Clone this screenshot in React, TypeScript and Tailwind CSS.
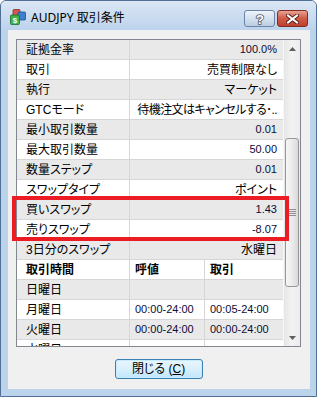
import React from 'react';

const gridFont = "font-['Liberation_Sans','Noto_Sans_CJK_JP',sans-serif] [font-feature-settings:'palt']";

type Row = { label: string; value: string; num?: boolean; tight?: boolean };

const rows: Row[] = [
  { label: '証拠金率', value: '100.0%', num: true },
  { label: '取引', value: '売買制限なし' },
  { label: '執行', value: 'マーケット' },
  { label: 'GTCモード', value: '待機注文はキャンセルする･..', tight: true },
  { label: '最小取引数量', value: '0.01', num: true },
  { label: '最大取引数量', value: '50.00', num: true },
  { label: '数量ステップ', value: '0.01', num: true },
  { label: 'スワップタイプ', value: 'ポイント' },
  { label: '買いスワップ', value: '1.43', num: true },
  { label: '売りスワップ', value: '-8.07', num: true },
  { label: '3日分のスワップ', value: '水曜日' },
];

const sessions = [
  { day: '日曜日', quote: '', trade: '' },
  { day: '月曜日', quote: '00:00-24:00', trade: '00:05-24:00' },
  { day: '火曜日', quote: '00:00-24:00', trade: '00:00-24:00' },
  { day: '水曜日', quote: '', trade: '' },
];

function PropRow({ row, shaded }: { row: Row; shaded: boolean }) {
  return (
    <div className={`flex h-[20px] shrink-0 border-b border-[#d6d6d6] ${shaded ? 'bg-[#e9e9e9]' : 'bg-white'}`}>
      <div className="w-[113px] shrink-0 border-r border-[#d6d6d6] pl-[9px] flex items-center text-[12px] text-black whitespace-nowrap">
        {row.label}
      </div>
      <div
        className={`flex-1 flex items-center justify-end pr-[6px] whitespace-nowrap overflow-hidden ${
          row.num ? 'text-[11px] text-[#0c0c36]' : 'text-[12px] text-black'
        } ${row.tight ? 'tracking-[-0.6px]' : ''}`}
      >
        {row.value}
      </div>
    </div>
  );
}

function TimeRow({ a, b, c, shaded, bold }: { a: string; b: string; c: string; shaded: boolean; bold?: boolean }) {
  const cell = bold ? 'text-[12px] font-bold text-black' : 'text-[11px] text-[#0c0c36]';
  return (
    <div className={`flex h-[20px] shrink-0 border-b border-[#d6d6d6] ${shaded ? 'bg-[#e9e9e9]' : 'bg-white'}`}>
      <div className={`w-[113px] shrink-0 border-r border-[#d6d6d6] pl-[9px] flex items-center text-[12px] text-black ${bold ? 'font-bold' : ''}`}>
        {a}
      </div>
      <div className={`w-[75px] shrink-0 border-r border-[#d6d6d6] pl-[5px] flex items-center whitespace-nowrap ${cell}`}>{b}</div>
      <div className={`flex-1 pl-[5px] flex items-center whitespace-nowrap ${cell}`}>{c}</div>
    </div>
  );
}

function Scrollbar() {
  return (
    <div className="w-[17px] shrink-0 flex flex-col bg-gradient-to-r from-[#e6e6e6] via-[#f3f3f3] to-[#ececec] border-l border-[#f7f7f7]">
      <div className="h-[17px] shrink-0 flex items-center justify-center">
        <svg width="7" height="4" viewBox="0 0 7 4">
          <path d="M3.5 0 L7 4 L0 4 Z" fill="#5f5f5f" />
        </svg>
      </div>
      <div className="flex-1 flex flex-col">
        <div className="mt-[81px] mx-[1px] h-[149px] rounded-[3px] border border-[#979797] bg-gradient-to-r from-[#f6f6f6] via-[#ececec] to-[#d9d9d9] flex flex-col items-center justify-center gap-[1px]">
          <div className="w-[7px] h-[1px] bg-[#8e8e8e]" />
          <div className="w-[7px] h-[1px] bg-[#8e8e8e]" />
          <div className="w-[7px] h-[1px] bg-[#8e8e8e]" />
          <div className="w-[7px] h-[1px] bg-[#8e8e8e]" />
        </div>
      </div>
      <div className="h-[17px] shrink-0 flex items-center justify-center">
        <svg width="7" height="4" viewBox="0 0 7 4">
          <path d="M0 0 L7 0 L3.5 4 Z" fill="#5f5f5f" />
        </svg>
      </div>
    </div>
  );
}

function AppIcon() {
  return (
    <svg width="16" height="16" viewBox="0 0 16 16">
      <rect x="3" y="0.5" width="7" height="6" rx="1" fill="#d9534f" stroke="#8a2a26" strokeWidth="0.8" />
      <rect x="8" y="3" width="7.5" height="8" rx="1" fill="#3d7fd0" stroke="#1f4f8f" strokeWidth="0.8" />
      <rect x="0.5" y="6" width="9" height="9.5" rx="1" fill="#3fb24a" stroke="#1d6e25" strokeWidth="0.8" />
      <text x="5" y="14" textAnchor="middle" fontSize="8" fontWeight="bold" fill="#ffffff" fontFamily="Liberation Sans, sans-serif">$</text>
    </svg>
  );
}

export default function App() {
  return (
    <div className="relative w-[317px] h-[397px] overflow-hidden bg-white">
      <div className="w-[317px] h-[397px] flex flex-col rounded-t-[6px] border border-[#4f6f96] bg-[#bcd3ec]">
        {/* title bar */}
        <div className="h-[29px] shrink-0 flex items-start pl-[9px] pr-[8px] rounded-t-[5px] bg-gradient-to-b from-[#dbe7f5] to-[#bcd3ec]">
          <div className="mt-[8px]">
            <AppIcon />
          </div>
          <div className="ml-[5px] mt-[9px] leading-[16px] text-[12px] text-black font-['Noto_Sans','Noto_Sans_CJK_JP',sans-serif] whitespace-nowrap">
            AUDJPY 取引条件
          </div>
          <div className="flex-1" />
          <div className="mt-[9px] flex gap-[2px]">
            <div className="w-[31px] h-[17px] rounded-[3px] border border-[#6b84a6] bg-gradient-to-b from-[#eef3f9] via-[#d5e1ef] to-[#bccde3] flex items-center justify-center">
              <svg width="12" height="13" viewBox="0 0 12 13">
                <text
                  x="6"
                  y="11.5"
                  textAnchor="middle"
                  fontSize="13"
                  fontWeight="bold"
                  fontFamily="Liberation Sans, sans-serif"
                  fill="#ffffff"
                  stroke="#4a5a70"
                  strokeWidth="1.6"
                  paintOrder="stroke"
                >
                  ?
                </text>
              </svg>
            </div>
            <div className="w-[31px] h-[17px] rounded-[3px] border border-[#7e2c24] bg-gradient-to-b from-[#e8a193] via-[#cf5a48] to-[#c0402b] flex items-center justify-center">
              <svg width="13" height="10" viewBox="0 0 13 10">
                <path d="M2 1.5 L11 8.5 M11 1.5 L2 8.5" stroke="#5a2019" strokeWidth="4" strokeLinecap="square" />
                <path d="M2 1.5 L11 8.5 M11 1.5 L2 8.5" stroke="#ffffff" strokeWidth="2" strokeLinecap="square" />
              </svg>
            </div>
          </div>
        </div>

        {/* client area */}
        <div className={`flex-1 ml-[7px] mr-[6px] mb-[7px] bg-[#f0f0f0] flex flex-col pl-[8px] pr-[9px] pt-[9px] ${gridFont}`}>
          <div className="h-[308px] shrink-0 border border-[#828790] bg-white flex">
            <div className="flex-1 flex flex-col overflow-hidden">
              {rows.map((r, i) => (
                <PropRow key={r.label} row={r} shaded={i % 2 === 0} />
              ))}
              <TimeRow a="取引時間" b="呼値" c="取引" shaded={false} bold />
              {sessions.map((s, i) => (
                <TimeRow key={s.day} a={s.day} b={s.quote} c={s.trade} shaded={i % 2 === 0} />
              ))}
            </div>
            <Scrollbar />
          </div>

          <div className="mt-[12px] self-center">
            <button className="w-[88px] h-[20px] rounded-[3px] border border-[#3c7fb1] bg-gradient-to-b from-[#eaf6fd] via-[#d9f0fc] to-[#bee6fd] shadow-[inset_0_0_0_1px_#c8ecff] flex items-center justify-center text-[12px] text-black leading-none">
              閉じる (<span className="underline">C</span>)
            </button>
          </div>
        </div>
      </div>

      {/* red highlight annotation */}
      <div className="absolute left-[12px] top-[196px] w-[277px] h-[45px] border-[4px] border-[#ec1c24]" />
    </div>
  );
}
